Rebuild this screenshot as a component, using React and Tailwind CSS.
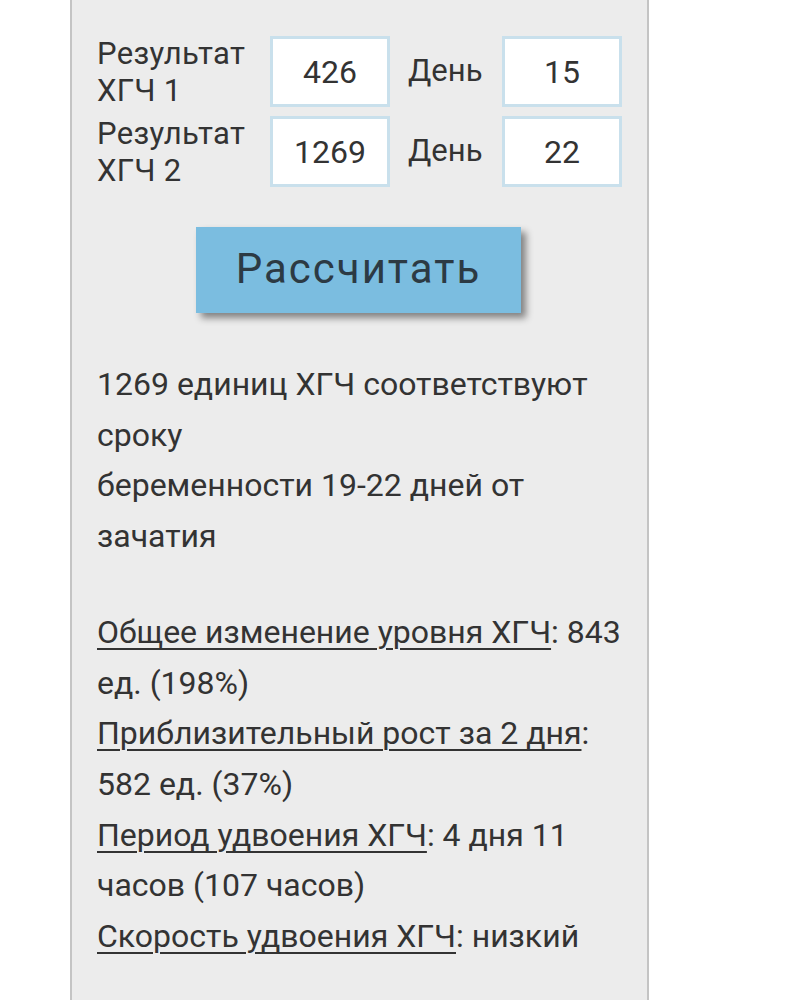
import { useState } from "react";

function NumberBox({ value, onChange }) {
    return (
        <input
            type="text"
            value={value}
            onChange={(e) => onChange(e.target.value)}
            className="w-[120px] h-[71px] bg-white border-[3px] border-[#c9e0ec] text-center text-[32px] text-[#333] outline-none"
        />
    );
}

export default function App() {
    const [hcg1, setHcg1] = useState("426");
    const [day1, setDay1] = useState("15");
    const [hcg2, setHcg2] = useState("1269");
    const [day2, setDay2] = useState("22");

    const rows = [
        { label: "ХГЧ 1", hcg: hcg1, setHcg: setHcg1, day: day1, setDay: setDay1 },
        { label: "ХГЧ 2", hcg: hcg2, setHcg: setHcg2, day: day2, setDay: setDay2 },
    ];

    return (
        <div className="min-h-screen bg-white font-['Roboto',sans-serif] text-[#333]">
            <div className="ml-[70px] w-[579px] min-h-[1000px] bg-[#ececec] border-x-2 border-[#c4c4c4] pl-[25px] pt-[36px] pb-10">
                <div className="flex flex-col gap-[9px]">
                    {rows.map((row) => (
                        <div key={row.label} className="flex items-center h-[71px]">
                            <div className="w-[173px] text-[31px] leading-[37px] tracking-[0.3px]">
                                Результат
                                <br />
                                {row.label}
                            </div>
                            <NumberBox value={row.hcg} onChange={row.setHcg} />
                            <span className="ml-[18px] w-[94px] text-[31px]">День</span>
                            <NumberBox value={row.day} onChange={row.setDay} />
                        </div>
                    ))}
                </div>

                <div className="pr-[27px] mt-[40px] flex justify-center">
                    <button className="w-[325px] h-[86px] pb-1 bg-[#7bbde0] text-[#2c3a44] text-[42px] tracking-[2px] shadow-[5px_5px_7px_rgba(0,0,0,0.45)]">
                        Рассчитать
                    </button>
                </div>

                <p className="mt-[46px] text-[32px] leading-[50.7px]">
                    1269 единиц ХГЧ соответствуют
                    <br />
                    сроку
                    <br />
                    беременности 19-22 дней от
                    <br />
                    зачатия
                </p>

                <div className="mt-[45px] text-[32px] leading-[50.7px] [&_u]:underline-offset-[5px] [&_u]:decoration-2">
                    <u>Общее изменение уровня ХГЧ</u>: 843
                    <br />
                    ед. (198%)
                    <br />
                    <u>Приблизительный рост за 2 дня</u>:
                    <br />
                    582 ед. (37%)
                    <br />
                    <u>Период удвоения ХГЧ</u>: 4 дня 11
                    <br />
                    часов (107 часов)
                    <br />
                    <u>Скорость удвоения ХГЧ</u>: низкий
                </div>
            </div>
        </div>
    );
}
